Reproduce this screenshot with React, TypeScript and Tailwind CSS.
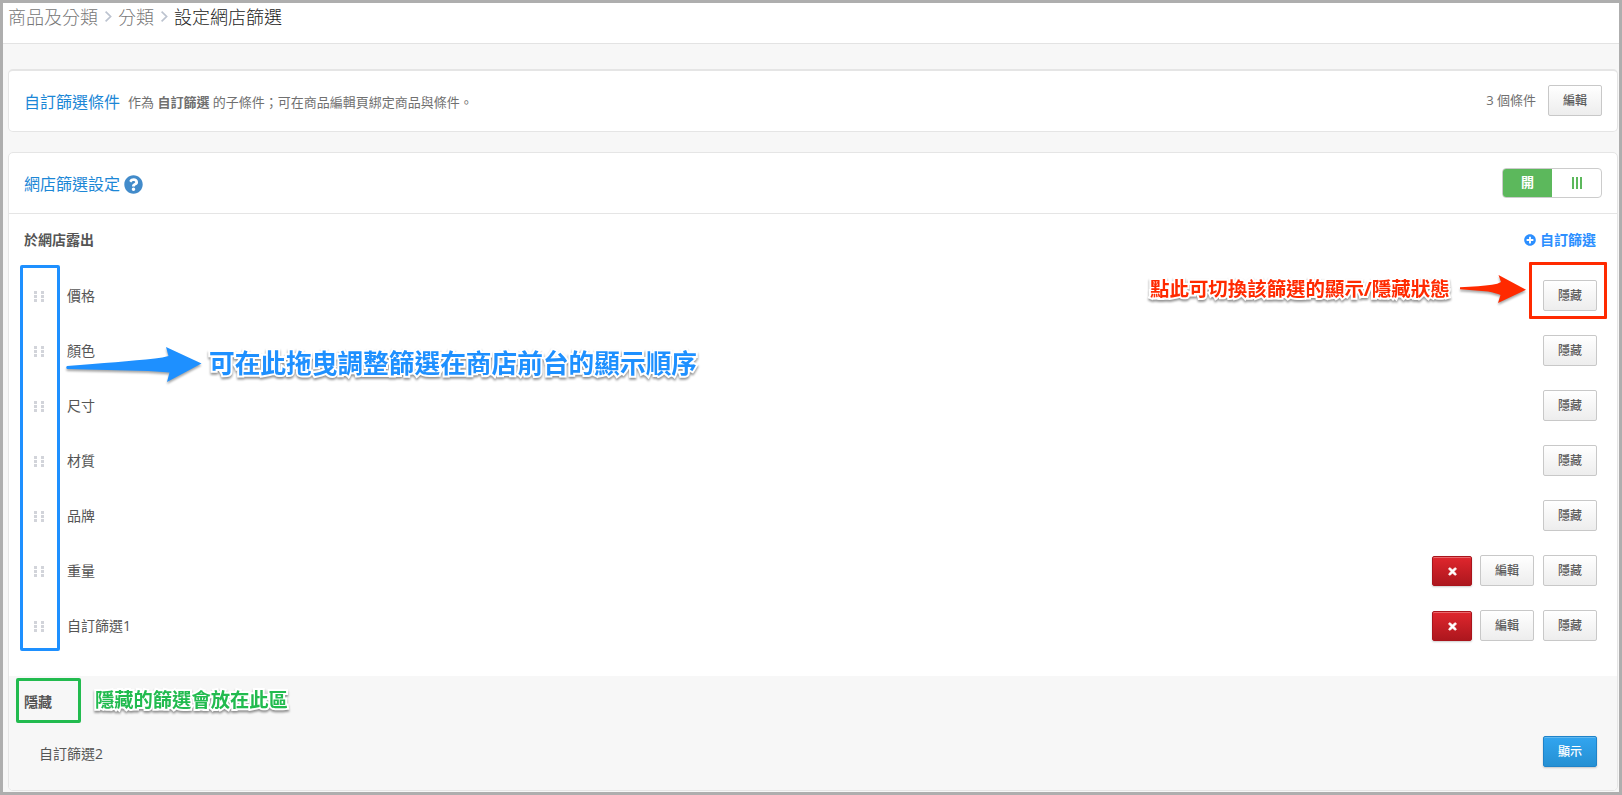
import clsx from "clsx";
import type { ReactNode } from "react";
import { FaPlusCircle, FaQuestionCircle, FaTimes } from "react-icons/fa";

interface Filter {
  name: string;
  custom?: boolean;
}

const VISIBLE_FILTERS: Filter[] = [
  { name: "價格" },
  { name: "顏色" },
  { name: "尺寸" },
  { name: "材質" },
  { name: "品牌" },
  { name: "重量", custom: true },
  { name: "自訂篩選1", custom: true },
];

const BUTTON_STYLES = {
  default: "w-[54px] h-[31px] border-[#c8c8c8] bg-linear-to-b from-white to-[#ededed] text-[#5a5a5a]",
  primary:
    "w-[54px] h-[31px] border-[#1f83c9] bg-linear-to-b from-[#32a5f0] to-[#2590d3] text-white shadow-[inset_0_1px_0_#62b8ef,0_1px_2px_#0003]",
  danger:
    "w-10 h-[30px] mt-px border-[#a9141b] bg-linear-to-b from-[#e0262d] to-[#ad171e] text-white shadow-[inset_0_1px_0_#e9686c,0_1px_2px_#0003]",
};

interface ButtonProps {
  variant?: keyof typeof BUTTON_STYLES;
  children: ReactNode;
}

function Button({ variant = "default", children }: ButtonProps) {
  return (
    <button
      className={clsx(
        "flex shrink-0 items-center justify-center rounded-[2px] border text-xs font-medium leading-none",
        BUTTON_STYLES[variant]
      )}
    >
      {children}
    </button>
  );
}

function Chevron() {
  return (
    <svg className="mx-[6px] mt-px h-[11px] w-2" viewBox="0 0 8 11" fill="none" stroke="#bcc3cf" strokeWidth="1.7">
      <path d="M1.6 0.7 L6.6 5.5 L1.6 10.3" />
    </svg>
  );
}

function DragHandle() {
  return (
    <svg className="mt-px h-[11px] w-[10px]" viewBox="0 0 10 11" fill="#d2d4da">
      {[0, 4, 8].map((y) => (
        <g key={y}>
          <rect x="0" y={y} width="3" height="3" />
          <rect x="7" y={y} width="3" height="3" />
        </g>
      ))}
    </svg>
  );
}

function FilterRow({ filter }: { filter: Filter }) {
  return (
    <li className="flex h-[55px] items-center pr-5 pl-[25px]">
      <DragHandle />
      <span className="ml-[23px] flex-1 pt-px text-sm text-[#555]">{filter.name}</span>
      <div className="flex">
        {filter.custom && (
          <div className="mr-[9px] flex gap-2">
            <Button variant="danger">
              <FaTimes className="h-[11px] w-[11px]" stroke="currentColor" strokeWidth="40" />
            </Button>
            <Button>編輯</Button>
          </div>
        )}
        <Button>隱藏</Button>
      </div>
    </li>
  );
}

function Callout({ className, children }: { className: string; children: ReactNode }) {
  return (
    <p
      className={clsx(
        "absolute font-bold leading-none whitespace-nowrap drop-shadow-[0_2px_1px_#0000006b] [-webkit-text-stroke:4px_white] [paint-order:stroke_fill]",
        className
      )}
    >
      {children}
    </p>
  );
}

export default function App() {
  return (
    <div className="relative flex h-[795px] w-[1622px] flex-col overflow-hidden border-[3px] border-[#aeaeae] bg-[#f7f7f7] font-['Open_Sans','Noto_Sans_CJK_TC',sans-serif]">
      {/* Breadcrumb */}
      <nav className="flex h-[41px] shrink-0 items-center border-b border-[#e3e3e3] bg-white pb-[15px] pl-[5px] font-['Noto_Sans_CJK_TC',sans-serif] text-lg leading-none font-light text-[#777]">
        <span>商品及分類</span>
        <Chevron />
        <span>分類</span>
        <Chevron />
        <span className="text-[#222]">設定網店篩選</span>
      </nav>

      <main className="flex flex-col gap-5 pt-[25px] pr-px pl-[5px]">
        <section className="flex h-[63px] items-center rounded-[5px] border border-t-2 border-[#e5e5e5] bg-white pr-[15px] pl-[15px]">
          <h2 className="pt-0.5 text-base text-[#1c87d6]">自訂篩選條件</h2>
          <p className="ml-2 flex-1 pt-[3px] text-[13px] text-[#707070]">
            作為 <b>自訂篩選</b> 的子條件；可在商品編輯頁綁定商品與條件。
          </p>
          <span className="mr-3 text-[13px] text-[#707070]">3 個條件</span>
          <div className="pb-px">
            <Button>編輯</Button>
          </div>
        </section>

        <section className="flex h-[639px] flex-col overflow-hidden rounded-[5px] border border-[#e5e5e5] bg-white">
          <header className="flex h-[61px] shrink-0 items-center border-b border-[#e5e5e5] pr-[15px] pl-[15px]">
            <h2 className="pt-0.5 text-base text-[#1c87d6]">網店篩選設定</h2>
            <FaQuestionCircle className="mt-[3px] ml-1 h-[19px] w-[19px] text-[#428bca]" />
            <div className="ml-auto flex h-[30px] w-[100px] overflow-hidden rounded-[4px] border border-[#ccc] text-[13px] font-bold">
              <span className="flex w-[49px] items-center justify-center bg-[#5cb85c] text-white">開</span>
              <span className="flex flex-1 items-center justify-center gap-[2px] pb-px">
                <i className="h-3 w-[2px] bg-[#5cb85c]" />
                <i className="h-3 w-[2px] bg-[#5cb85c]" />
                <i className="h-3 w-[2px] bg-[#5cb85c]" />
              </span>
            </div>
          </header>

          <div className="flex h-[54px] shrink-0 items-center justify-between pr-[21px] pb-0.5 pl-[15px] text-sm font-bold">
            <h3 className="text-[#555]">於網店露出</h3>
            <a className="flex items-center gap-1 text-[#2c8fff]">
              <FaPlusCircle className="h-3 w-3" />
              自訂篩選
            </a>
          </div>

          <ul>
            {VISIBLE_FILTERS.map((filter) => (
              <FilterRow key={filter.name} filter={filter} />
            ))}
          </ul>

          <div className="mt-[23px] flex-1 bg-[#f7f7f7] pt-px pr-5 pl-[15px] text-sm text-[#555]">
            <h3 className="flex h-[49px] items-center font-bold">隱藏</h3>
            <div className="flex h-[51px] items-center justify-between pl-[15px]">
              <span className="pt-1">自訂篩選2</span>
              <Button variant="primary">顯示</Button>
            </div>
          </div>
        </section>
      </main>

      {/* Annotations */}
      <div className="absolute top-[262px] left-[17px] h-[386px] w-[40px] rounded-[2px] border-3 border-[#1e90ff]" />
      <div className="absolute top-[259px] left-[1526px] h-[57px] w-[78px] rounded-[1px] border-3 border-[#ff2a00]" />
      <div className="absolute top-[675px] left-[13px] h-[45px] w-[65px] rounded-[2px] border-3 border-[#22bb4f]" />

      <svg
        className="absolute top-[342px] left-[61px] h-[44px] w-[142px] drop-shadow-[0_2px_1px_#00000059]"
        viewBox="64 345 142 44"
        fill="#1e90ff"
      >
        <path d="M67 366 Q120 362 155 358.5 Q163 357.5 168.5 356 L166 347 L201.5 363.5 L167 382 L169.5 372.5 Q160 371.5 148 371 L67 369 Q65.5 367.5 67 366Z" />
      </svg>
      <svg
        className="absolute top-[269px] left-[1455px] h-[38px] w-[75px] drop-shadow-[0_2px_1px_#00000059]"
        viewBox="1458 272 75 38"
        fill="#ff2a00"
      >
        <path d="M1460 287.3 Q1480 286.5 1492 284.8 Q1498 284 1501 282 L1498.5 275 L1526 289.7 L1498 303 L1500.5 295 Q1496 293 1488 291.5 L1460 289.3Z" />
      </svg>

      <Callout className="top-[348px] left-[206px] text-[25.7px] text-[#1e90ff]">
        可在此拖曳調整篩選在商店前台的顯示順序
      </Callout>
      <Callout className="top-[276px] left-[1147px] text-[19.45px] text-[#ff2a00]">
        點此可切換該篩選的顯示/隱藏狀態
      </Callout>
      <Callout className="top-[687px] left-[92px] text-[19.3px] text-[#22bb4f]">隱藏的篩選會放在此區</Callout>
    </div>
  );
}
